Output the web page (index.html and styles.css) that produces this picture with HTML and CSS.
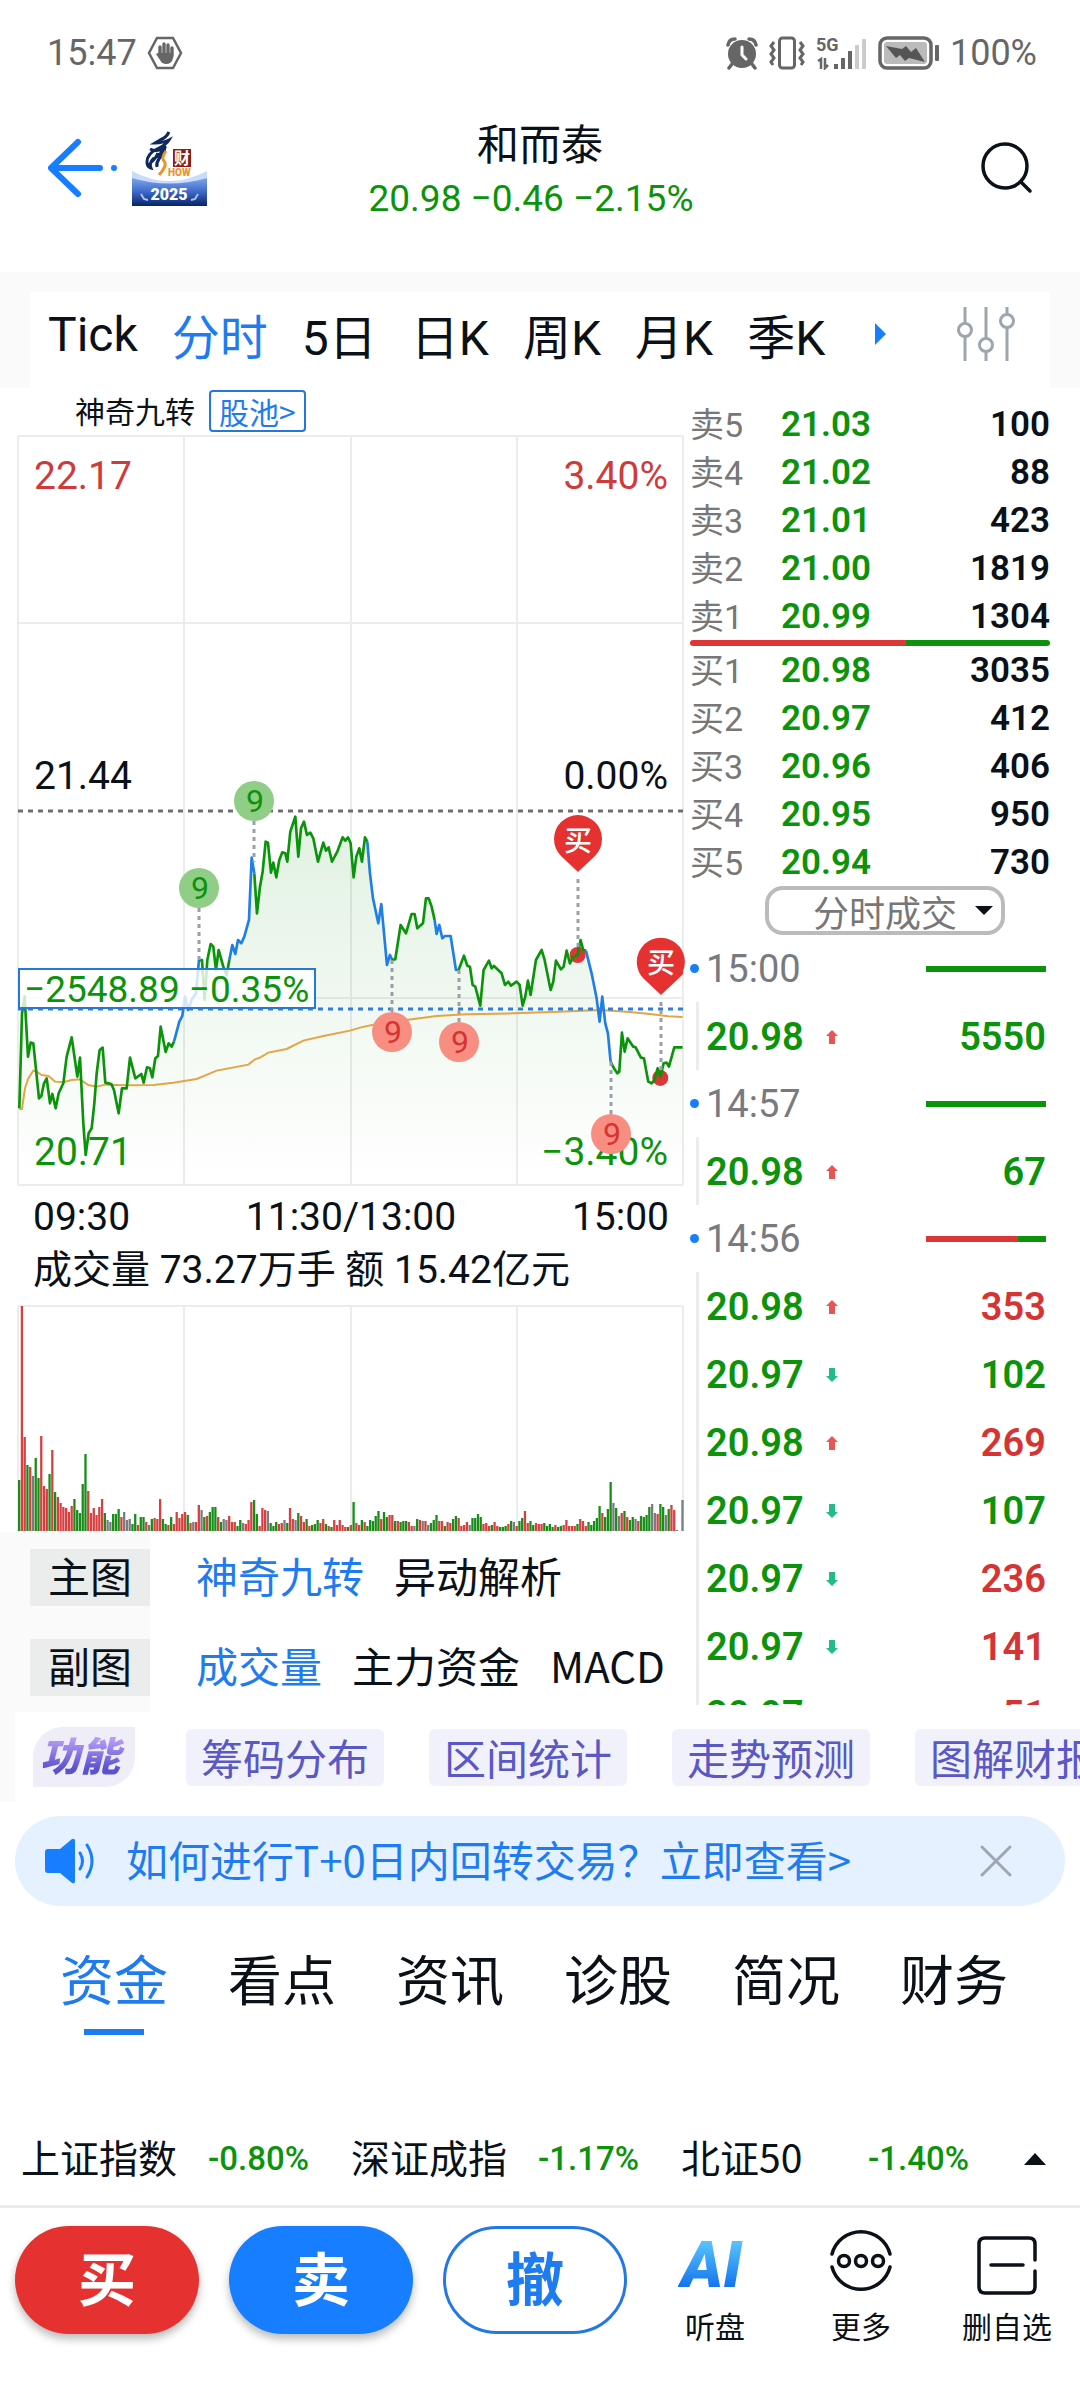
FILE: index.html
```html
<!DOCTYPE html>
<html lang="zh-CN">
<head>
<meta charset="utf-8">
<meta name="viewport" content="width=device-width">
<title>和而泰</title>
<link rel="stylesheet" href="styles.css">
</head>
<body>
<div class="status">
  <span>15:47</span>
  <svg width="36" height="36" viewBox="0 0 36 36" fill="none" stroke="#666" stroke-width="2.5"><path d="M10 3h16l8 15-8 15H10L2 18z"/><path d="M13 21V12M17 19V9M21 19V10M25 21V13" stroke-width="3.4" stroke-linecap="round"/><path d="M12 18h14v5q-1 6-7 6-4 0-6-4l-4-6 2-1z" fill="#666" stroke="none"/></svg>
  <span class="grow"></span>
  <svg width="32" height="34" viewBox="0 0 32 34"><circle cx="16" cy="18" r="14" fill="#666"/><path d="M2 9Q3 3 9 3M30 9Q29 3 23 3M6 28l-3 4M26 28l3 4" stroke="#666" stroke-width="3.5" fill="none" stroke-linecap="round"/><path d="M16 11v8l4 4" stroke="#fff" stroke-width="3" fill="none" stroke-linecap="round"/></svg>
  <svg width="38" height="34" viewBox="0 0 38 34" fill="none" stroke="#666" stroke-width="3"><rect x="11.500" y="2" width="15" height="30" rx="3"/><path d="M6 6l-3 4 3 4-3 4 3 4-3 4 2 3M32 6l3 4-3 4 3 4-3 4 3 4-2 3"/></svg>
  <svg class="signal" width="52" height="34" viewBox="0 0 52 34"><text x="0" y="15">5G</text><path d="M2 25l3-2v10M9 22v10l3-3" stroke="#666" stroke-width="2.500" fill="none"/><path d="M18 28h4v5h-4zM25 22h4v11h-4zM32 15h4v18h-4z" fill="#666"/><path d="M39 9h4v24h-4zM46 3h4v30h-4z" fill="#ccc"/></svg>
  <svg width="62" height="34" viewBox="0 0 62 34"><rect x="2" y="2" width="51" height="30" rx="7" fill="none" stroke="#666" stroke-width="3.500"/><rect x="6" y="6" width="43" height="22" rx="3" fill="#bbb"/><path d="M8 10l16 3 4-3 5 6 5-4 9 14-16-4-4 3-5-6-4 3z" fill="#555"/><rect x="57" y="9" width="4" height="16" rx="1" fill="#666"/></svg>
  <span>100%</span>
</div>

<header class="header">
  <button class="back" aria-label="返回"><svg width="70" height="60" viewBox="0 0 70 60" fill="none" stroke="#177eff" stroke-width="6" stroke-linecap="round" stroke-linejoin="round"><path d="M30 4L3 30l27 26M3 30h49"/><circle cx="66" cy="30" r="3" fill="#177eff" stroke="none"/></svg></button>
  <a class="logo" href="#" aria-label="2025">
    <svg width="75" height="75" viewBox="0 0 75 75"><defs><linearGradient id="sea" x2="0" y2="1"><stop offset="0" stop-color="#7fa5ec"/><stop offset=".5" stop-color="#3d68c9"/><stop offset="1" stop-color="#062464"/></linearGradient></defs><path d="M0 40Q37 60 75 40V75H0z" fill="#c9dcfb"/><path d="M0 47Q37 58 75 47V75H0z" fill="url(#sea)"/><path d="M37 1q-3 6-9 8l-5 3q8 0 14-3-3 5-12 9-10 5-10 13 0 5 4 6-2-5 2-9 7-3 12-12-1 7-6 12-3 4-2 8M18 18q8 4 16-3M26 22q-4 9-11 12" fill="none" stroke="#10285e" stroke-width="3"/><path d="M34 20q-5 7-2 10 4 4-5 14" fill="none" stroke="#e9952f" stroke-width="3"/><rect x="41" y="18" width="18" height="18" fill="#8e1c1c"/><text x="42" y="33" class="logo-seal">财</text><text x="36" y="45" class="logo-show">HOW</text><path d="M9 63l3 5 4 1M66 63l-3 5-4 1" fill="none" stroke="#a9c2f2" stroke-width="2"/><text x="37" y="69" text-anchor="middle" class="logo-year">2025</text></svg>
  </a>
  <div class="title">
    <h1>和而泰</h1>
    <p>20.98 −0.46 −2.15%</p>
  </div>
  <button class="search" aria-label="搜索"><svg width="54" height="54" viewBox="0 0 54 54" fill="none" stroke="#0b1118" stroke-width="3.500" stroke-linecap="round"><circle cx="25" cy="25" r="22"/><path d="M41 41l9 9"/></svg></button>
</header>

<nav class="periods">
  <div class="period-bar">
    <button>Tick</button><button class="on">分时</button><button>5日</button><button>日K</button><button>周K</button><button>月K</button><button>季K</button>
    <span class="more-arrow"></span>
    <button class="tune" aria-label="设置"><svg width="58" height="56" viewBox="0 0 58 56" fill="none" stroke="#9ca5b0" stroke-width="3"><path d="M8 1v16M8 31v24M29 1v31M29 46v9M50 1v7M50 22v33"/><circle cx="8" cy="24" r="6.500"/><circle cx="29" cy="39" r="6.500"/><circle cx="50" cy="15" r="6.500"/></svg></button>
  </div>
</nav>

<main class="board">
  <section class="left">
    <div class="signal-row"><span>神奇九转</span><button>股池&gt;</button></div>
    <svg class="chart" viewBox="0 434 690 756">
      <defs><linearGradient id="fade" gradientUnits="userSpaceOnUse" x1="0" y1="150" x2="0" y2="1275"><stop offset="0" stop-color="#008c0a" stop-opacity=".12"/><stop offset="1" stop-color="#008c0a" stop-opacity="0"/></linearGradient></defs>
      <path class="grid" d="M18 436H683M18 623H683M18 998H683M18 1185H683M18 436V1185M184 436V1185M351 436V1185M517 436V1185M683 436V1185"/>
      <path class="zero" d="M18 811H683"/>
      <g id="price" transform="translate(0 760) scale(.3333)"></g>
      <path class="index" d="M18 1009H683"/>
      <g class="lead"><path d="M254 821V862M199 908V960M392 960V1012M459 970V1022M611 1062V1114M578 879V948M661 1002V1070"/></g>
      <rect class="last" x="19" y="969" width="296" height="39"/>
      <text x="24" y="1002" class="c-green last-text">−2548.89 −0.35%</text>
      <g class="scale">
        <text x="34" y="489" class="c-red">22.17</text><text x="668" y="489" class="c-red" text-anchor="end">3.40%</text>
        <text x="34" y="789">21.44</text><text x="668" y="789" text-anchor="end">0.00%</text>
        <text x="34" y="1165" class="c-green">20.71</text><text x="668" y="1165" class="c-green" text-anchor="end">−3.40%</text>
      </g>
      <g class="nine up"><circle cx="254" cy="801" r="20"/><text x="255" y="812">9</text><circle cx="199" cy="888" r="20"/><text x="200" y="899">9</text></g>
      <g class="nine down"><circle cx="392" cy="1032" r="20"/><text x="393" y="1043">9</text><circle cx="459" cy="1042" r="20"/><text x="460" y="1053">9</text><circle cx="611" cy="1134" r="20"/><text x="612" y="1145">9</text></g>
      <g class="pin"><path d="M578 872L561 856A24 24 0 1 1 595 856zM661 995L644 979A24 24 0 1 1 683 971V974L678 979z"/><text x="578" y="851">买</text><text x="661" y="973">买</text></g>
    </svg>
    <div class="times"><span>09:30</span><span>11:30/13:00</span><span>15:00</span></div>
    <p class="volume-title">成交量 73.27万手 额 15.42亿元</p>
    <svg class="chart" viewBox="0 1300 690 232">
      <path class="grid" d="M18 1306H683M18 1306V1531M184 1306V1531M351 1306V1531M517 1306V1531M683 1306V1531"/>
      <g id="volume"></g>
    </svg>
    <div class="indicator"><span class="kind"><b>主图</b></span><div class="choices"><button class="on">神奇九转</button><button>异动解析</button></div></div>
    <div class="indicator"><span class="kind"><b>副图</b></span><div class="choices"><button class="on">成交量</button><button>主力资金</button><button>MACD</button></div></div>
  </section>

  <section class="right">
    <table class="book">
      <tr><th>卖5</th><td>21.03</td><td>100</td></tr>
      <tr><th>卖4</th><td>21.02</td><td>88</td></tr>
      <tr><th>卖3</th><td>21.01</td><td>423</td></tr>
      <tr><th>卖2</th><td>21.00</td><td>1819</td></tr>
      <tr><th>卖1</th><td>20.99</td><td>1304</td></tr>
    </table>
    <div class="ratio"></div>
    <table class="book">
      <tr><th>买1</th><td>20.98</td><td>3035</td></tr>
      <tr><th>买2</th><td>20.97</td><td>412</td></tr>
      <tr><th>买3</th><td>20.96</td><td>406</td></tr>
      <tr><th>买4</th><td>20.95</td><td>950</td></tr>
      <tr><th>买5</th><td>20.94</td><td>730</td></tr>
    </table>
    <button class="deal-type">分时成交<i></i></button>
    <div class="ticks">
      <div class="minute"><time>15:00</time><i class="all-sell"></i></div>
      <ul><li><span>20.98</span><svg class="arrow up"><use href="#arr-up"/></svg><b class="g">5550</b></li></ul>
      <div class="minute"><time>14:57</time><i class="all-sell"></i></div>
      <ul><li><span>20.98</span><svg class="arrow up"><use href="#arr-up"/></svg><b class="g">67</b></li></ul>
      <div class="minute"><time>14:56</time><i class="mixed"></i></div>
      <ul>
        <li><span>20.98</span><svg class="arrow up"><use href="#arr-up"/></svg><b>353</b></li>
        <li><span>20.97</span><svg class="arrow down"><use href="#arr-down"/></svg><b class="g">102</b></li>
        <li><span>20.98</span><svg class="arrow up"><use href="#arr-up"/></svg><b>269</b></li>
        <li><span>20.97</span><svg class="arrow down"><use href="#arr-down"/></svg><b class="g">107</b></li>
        <li><span>20.97</span><svg class="arrow down"><use href="#arr-down"/></svg><b>236</b></li>
        <li><span>20.97</span><svg class="arrow down"><use href="#arr-down"/></svg><b>141</b></li>
        <li><span>20.97</span><svg class="arrow"></svg><b>51</b></li>
      </ul>
    </div>
  </section>
</main>

<nav class="tools">
  <span class="badge"><em>功能</em></span>
  <button>筹码分布</button><button>区间统计</button><button>走势预测</button><button>图解财报</button>
</nav>

<aside class="notice">
  <svg width="52" height="46" viewBox="0 0 52 46"><path d="M3 11h12L27 1q3-1 3 2v40q0 3-3 2L15 35H3q-3 0-3-3V14q0-3 3-3z" fill="#177eff"/><path d="M35 15q5 8 0 16M42 7q10 16 0 32" fill="none" stroke="#177eff" stroke-width="3" stroke-linecap="round"/></svg>
  <a href="#">如何进行T+0日内回转交易？立即查看&gt;</a>
  <button aria-label="关闭"><svg width="34" height="34" viewBox="0 0 34 34" stroke="#9fa8b2" stroke-width="3" stroke-linecap="round"><path d="M3 3l28 28M31 3L3 31"/></svg></button>
</aside>

<nav class="sections">
  <a href="#" class="on">资金</a><a href="#">看点</a><a href="#">资讯</a><a href="#">诊股</a><a href="#">简况</a><a href="#">财务</a>
</nav>

<div class="indices">
  <div><span>上证指数</span><b>-0.80%</b></div>
  <div><span>深证成指</span><b>-1.17%</b></div>
  <div><span>北证50</span><b>-1.40%</b></div>
  <i></i>
</div>

<footer class="actions">
  <button class="trade buy">买</button><button class="trade sell">卖</button><button class="trade cancel">撤</button>
  <button class="item"><svg width="74" height="70" viewBox="0 0 74 70"><defs><linearGradient id="sky" x2="0" y2="1"><stop offset=".2" stop-color="#56c1fb"/><stop offset=".85" stop-color="#0d6cec"/></linearGradient></defs><text x="3" y="61" class="ai" fill="url(#sky)">AI</text></svg>听盘</button>
  <button class="item"><svg width="70" height="70" viewBox="0 0 70 70" fill="none" stroke="#0b1118" stroke-width="3.500" stroke-linecap="round"><path d="M6 28A30 30 0 0 1 64 28M6 41A30 30 0 0 0 64 41"/><circle cx="18" cy="35" r="5.500"/><circle cx="35" cy="35" r="5.500"/><circle cx="52" cy="35" r="5.500"/></svg>更多</button>
  <button class="item"><svg width="70" height="70" viewBox="0 0 70 70" fill="none" stroke="#0b1118" stroke-width="3.500" stroke-linecap="round"><path d="M63 34V18Q63 12 57 12H13Q7 12 7 18V61Q7 67 13 67H57Q63 67 63 61V45M19 39H51"/></svg>删自选</button>
</footer>

<svg width="0" height="0" class="sprite"><symbol id="arr-up" viewBox="0 0 12 16"><path d="M6 1l6 6H9v8H3V7H0z"/></symbol><symbol id="arr-down" viewBox="0 0 12 16"><path d="M6 15l6-6H9V1H3v8H0z"/></symbol></svg>
<script src="script.js"></script>
</body>
</html>
```
FILE: styles.css
```css
* { box-sizing: border-box; }
body { margin: 0; background: #fff; color: #0b1118; font-family: Roboto, "Noto Sans CJK SC", sans-serif; }
button { border: 0; background: none; padding: 0; margin: 0; font: inherit; color: inherit; white-space: nowrap; }
a { color: inherit; text-decoration: none; }
h1, p, ul { margin: 0; padding: 0; font-weight: 400; list-style: none; }
svg { display: block; flex: none; }
.on { color: #1f7cf0; }
.sprite { position: absolute; }

.status { display: flex; align-items: center; gap: 10px; height: 104px; padding: 2px 43px 0 47px; font-size: 36px; color: #666; }
.grow { flex: 1; }
.signal text { font: 700 18px Roboto, sans-serif; fill: #666; }

.header { display: flex; align-items: center; height: 168px; padding: 0 46px 40px 48px; gap: 14px; position: relative; }
.title { position: absolute; left: 0; right: 0; top: 14px; text-align: center; pointer-events: none; }
.title h1 { font-size: 42px; line-height: 56px; }
.title p { padding-right: 18px; font-size: 37px; line-height: 50px; color: #0c930c; }
.search { margin-left: auto; }
.logo-seal { font: 700 16px "Noto Sans CJK SC", sans-serif; fill: #fff; }
.logo-show { font: 900 10px Roboto, sans-serif; fill: #e9952f; }
.logo-year { font: 900 16px Roboto, sans-serif; fill: #fff; }

.periods { background: #fafafa; padding: 20px 30px 0; }
.period-bar { display: flex; align-items: center; gap: 34px; height: 96px; padding: 0 35px 12px 18px; background: #fff; font: 48px Roboto, "Noto Sans CJK SC", sans-serif; }
.more-arrow { margin-left: 16px; border-left: 11px solid #177eff; border-top: 11px solid transparent; border-bottom: 11px solid transparent; }
.tune { margin-left: auto; }

.board { display: grid; grid-template-columns: minmax(0, 1fr) 390px; }
.left { min-width: 0; }
.signal-row { display: flex; align-items: center; gap: 14px; height: 46px; padding-left: 75px; font: 30px "Noto Sans CJK SC", sans-serif; }
.signal-row button { height: 42px; padding: 0 8px; border: 2px solid #2478dc; border-radius: 4px; color: #1f7cf0; line-height: 36px; }
.signal-row span { line-height: 36px; padding-bottom: 2px; }
.chart { width: 100%; height: auto; }
.grid { fill: none; stroke: #ebecec; stroke-width: 2; }
.zero { stroke: #6c7074; stroke-width: 3; stroke-dasharray: 5 5; }
.index { stroke: #2f7de0; stroke-width: 3; stroke-dasharray: 5 5; }
.lead { stroke: #9aa0a8; stroke-width: 3; stroke-dasharray: 4 4; }
.last { fill: #fff; fill-opacity: .8; stroke: #2478dc; stroke-width: 2; }
.last-text { font-size: 37px; }
.scale { font-size: 39px; fill: #0b1118; }
.c-red { fill: #cf3a3a; }
.c-green, .scale .c-green { fill: #0c930c; }
.nine { font-size: 32px; text-anchor: middle; }
.up circle { fill: #90cd87; }
.up text { fill: #0c930c; }
.down circle { fill: #f88e81; }
.down text { fill: #d63434; }
.pin path { fill: #e63131; }
.pin text { fill: #fff; font: 500 28px "Noto Sans CJK SC", sans-serif; text-anchor: middle; }
.line { fill: none; stroke-width: 8; stroke-linejoin: round; }
.average { fill: none; stroke: #e3a545; stroke-width: 6; }
.times { display: grid; grid-template-columns: 1fr auto 1fr; height: 52px; padding: 0 21px 0 33px; font-size: 39px; line-height: 54px; }
.times span:last-child { text-align: right; }
.volume-title { height: 58px; padding-left: 33px; font-size: 39px; line-height: 57px; white-space: nowrap; }
.indicator { display: flex; height: 90px; font: 42px "Noto Sans CJK SC", sans-serif; }
.kind { display: flex; align-items: center; width: 150px; padding-left: 30px; background: #fafafa; }
.kind b { width: 120px; height: 57px; background: #ebeded; font-weight: 400; line-height: 52px; text-align: center; }
.choices { display: flex; align-items: center; gap: 30px; flex: 1; min-width: 0; margin: 0 23px 0 46px; padding-bottom: 5px; overflow: hidden; }

.right { display: flex; flex-direction: column; padding: 12px 30px 7px 0; }
.book { width: 100%; border-collapse: collapse; }
.book th, .book td { height: 48px; padding: 2px 0 0; line-height: 46px; }
.book th { width: 91px; text-align: left; font-size: 34px; font-weight: 400; color: #777; }
.book td { font-size: 35px; font-weight: 600; color: #0c930c; }
.book td:last-child { text-align: right; color: #0b1118; }
.ratio { height: 6px; border-radius: 3px; background: linear-gradient(to right, #dc3636 60%, #0c930c 60%); }
.deal-type { display: flex; align-items: center; justify-content: flex-end; gap: 18px; width: 240px; height: 49px; margin-left: 75px; padding-right: 8px; border: 4px solid #bbb; border-radius: 18px; color: #777; font: 36px "Noto Sans CJK SC", sans-serif; line-height: 40px; }
.deal-type i { border-top: 9px solid #0b1118; border-left: 9px solid transparent; border-right: 9px solid transparent; }
.ticks { flex: 1 1 0px; min-height: 0; overflow: hidden; font-size: 38px; }
.minute { display: flex; align-items: center; height: 67px; padding-right: 4px; color: #777b80; }
.minute::before { content: ""; width: 9px; height: 9px; margin-right: 7px; border-radius: 5px; background: #177eff; }
.minute i { width: 120px; height: 6px; margin-left: auto; }
.all-sell { background: #0c930c; }
.mixed { background: linear-gradient(to right, #dc3636 77%, #0c930c 77%); }
.ticks ul { margin-left: 6px; border-left: 3px solid #ececec; }
.ticks li { display: flex; align-items: center; height: 68px; padding: 2px 4px 0 7px; color: #0c930c; font-weight: 600; }
.ticks b { margin-left: auto; font-weight: 600; color: #d63434; }
.ticks b.g { color: #0c930c; }
.arrow { width: 12px; height: 16px; margin-left: 22px; }
.arrow.up { fill: #e85555; }
.arrow.down { fill: #22bd84; }

.tools { display: flex; align-items: center; gap: 45px; height: 90px; padding-left: 33px; overflow: hidden; background: linear-gradient(to right, #fafafa 15px, #fff 15px); color: #5a58c4; font: 42px "Noto Sans CJK SC", sans-serif; }
.tools button { flex: none; height: 57px; padding: 0 15px; border-radius: 6px; background: #f1f1fc; line-height: 52px; }
.badge { flex: none; width: 102px; height: 60px; margin-right: 6px; border-radius: 30px 0; background: #eeedf8; text-align: center; font-size: 40px; font-weight: 900; line-height: 55px; }
.badge em { padding-right: 8px; background: linear-gradient(#b79bf6 25%, #5a52cf 75%); background-clip: text; -webkit-background-clip: text; color: transparent; }

.notice { display: flex; align-items: center; height: 90px; margin: 14px 15px 0; padding: 0 52px 0 30px; border-radius: 45px; background: #e5f1fe; color: #1f7cf0; font: 42px "Noto Sans CJK SC", sans-serif; }
.notice a { flex: 1; margin-left: 29px; padding-bottom: 6px; white-space: nowrap; }

.sections { display: flex; gap: 60px; height: 129px; padding: 34px 60px 0; font: 54px "Noto Sans CJK SC", sans-serif; line-height: 76px; }
.sections a { position: relative; }
.sections .on::after { content: ""; position: absolute; left: 24px; right: 24px; bottom: 0; height: 6px; background: #1f7cf0; }

.indices { display: grid; grid-template-columns: repeat(3, 1fr) 90px; align-items: center; height: 96px; margin-top: 77px; border-bottom: 3px solid #ebebeb; font: 39px "Noto Sans CJK SC", sans-serif; }
.indices div { display: flex; justify-content: space-between; align-items: center; padding: 0 21px; }
.indices span { padding-bottom: 6px; }
.indices b { color: #0c930c; font: 500 33px Roboto, sans-serif; }
.indices i { justify-self: center; border-bottom: 12px solid #0b1118; border-left: 11px solid transparent; border-right: 11px solid transparent; }

.actions { display: flex; align-items: flex-start; padding: 18px 0 48px 15px; }
.trade { flex: none; width: 184px; height: 108px; margin-right: 30px; padding-bottom: 8px; border-radius: 54px; color: #fff; font: 700 58px "Noto Sans CJK SC", sans-serif; }
.buy { background: #e63131; box-shadow: 0 5px 9px #bbb; }
.sell { background: #177eff; box-shadow: 0 5px 9px #bbb; }
.cancel { margin-right: 15px; border: 3px solid #2478e4; color: #1f7cf0; }
.item { display: flex; flex: 1; flex-direction: column; align-items: center; font: 30px "Noto Sans CJK SC", sans-serif; line-height: 58px; }
.ai { font: italic 900 64px Roboto, sans-serif; }
```
FILE: script.js
```js
// Minute prices as runs of "x,y" points; g = normal run, b = run highlighted by the nine-turn rule.
const runs = [
  ['g', '58,1045 66,760 74,710 84,890 92,848 100,850 117,1015 124,1008 132,970 140,955 150,1030 157,1002 167,1045 176,1000 190,970 200,890 215,832 232,950 240,893 250,1090 257,1185 266,1120 275,1105 283,1030 290,940 299,870 308,863 316,968 334,972 342,990 356,1060 366,985 380,985 390,893 406,955 424,942 431,968 441,922 450,925 457,952 466,895 474,888 482,800 497,876 506,850 515,860 522,845'],
  ['b', '522,845 538,785 547,768 555,710 564,750 575,720 588,700 597,600'],
  ['g', '597,600 606,600 614,720 622,600 632,552 640,560 648,630 656,570 670,620 680,645 688,600'],
  ['b', '688,600 697,555 706,582 714,540 724,550 733,530 747,480 755,293 763,340'],
  ['g', '763,340 771,460 780,380 788,335 797,245 804,248 813,338 820,308 829,352 838,300 847,277 856,280 862,305 871,215 886,170 895,290 903,205 912,185 921,225 931,218 940,235 954,305 970,248 978,272 986,262 996,305 1012,275 1028,232 1036,242 1044,232 1052,250 1061,352 1069,290 1078,265 1086,305 1095,232 1102,245'],
  ['b', '1102,245 1110,340 1119,415 1135,490 1144,432 1161,615 1170,585 1177,600'],
  ['g', '1177,600 1186,598 1202,495 1218,520 1235,462 1244,462 1252,505 1269,490 1278,415 1286,415 1295,440 1304,480'],
  ['b', '1304,480 1310,522 1318,495 1327,535 1335,528 1352,528 1368,630 1376,630'],
  ['g', '1376,630 1392,587 1402,617 1410,620 1418,675 1426,680 1441,737 1451,630 1467,602 1475,625 1482,618 1505,640 1515,675 1525,665 1533,677 1550,665 1559,675 1568,737 1576,710 1584,662 1592,705 1608,600 1625,570 1634,600 1652,690 1660,665 1668,602 1683,628 1691,620 1700,572 1710,610 1720,590 1733,585 1742,540 1750,570 1758,572'],
  ['b', '1758,572 1775,640 1790,715 1799,785 1807,710 1816,790 1824,820 1832,905'],
  ['g', '1832,905 1842,925 1852,940 1858,935 1866,818 1874,875 1883,835 1900,860 1907,862 1923,893 1932,895 1945,965 1955,970 1964,960 1973,925 1982,950 1991,910 2000,908 2007,920 2023,862 2048,862']
];
const average = '58,1047 66,1047 75,985 85,955 100,932 110,935 125,945 145,948 165,965 190,967 215,960 240,958 265,975 290,980 315,974 380,976 460,975 520,968 590,957 650,932 745,914 765,898 780,893 805,878 860,867 910,842 970,828 1050,812 1080,803 1140,790 1235,778 1310,768 1400,763 1540,760 1680,755 1800,750 1890,756 1950,762 2005,769 2048,771';

// One bar per minute: r = up, g = down, n = flat, then its height.
const volume = 'g51 r225 r94 g66 r64 n55 g73 g53 r95 r45 r42 g57 r81 g39 r34 r28 r24 r23 r19 r25 g32 g21 g18 g47 g77 r40 r18 r23 r16 r24 r32 g18 n11 n9 g17 g17 g22 r14 n19 n11 n12 g7 g17 r6 g14 g14 r9 n6 g12 r13 r12 r32 g12 g7 r6 g14 r7 r19 r13 r17 r19 g16 r8 n9 r9 r26 n21 g14 r15 g19 g24 g24 r14 g9 n12 n11 r15 r9 r9 g5 g11 n8 r7 r11 r29 g31 g17 r5 r23 r21 n20 g8 g5 g9 r7 r8 n11 g8 r23 r12 n11 g18 r15 r9 g12 r5 g6 g7 g11 r8 r12 g7 r5 g4 r11 r6 r11 r6 r4 g4 r6 g29 r8 r6 g11 r9 g5 g11 g10 g15 g20 r12 g19 g14 r16 r16 g10 r10 g9 g10 g10 r9 r5 n5 g12 r11 n10 r10 n6 g8 g11 g16 r10 r10 g5 r9 r8 g12 g15 r13 r5 r6 r9 n6 g13 g13 g17 g14 r7 r8 r5 g6 r9 r5 g4 g4 g5 r7 g10 n9 r5 g10 g13 r20 r8 g10 g6 r8 r7 r7 g8 g5 g7 g4 r6 g4 g5 r6 r11 r5 r5 r5 g7 r12 r10 r5 g9 g6 g10 g13 g25 r18 g14 g22 g49 n28 g23 n15 r18 g20 r14 g11 g14 n12 r10 g15 g14 g16 g24 n27 n18 r17 g27 g24 n16 g22 r26 r21 n1 n0 n31';

const svgNode = (name, attrs, parent) => {
  const node = document.createElementNS('http://www.w3.org/2000/svg', name);
  for (const key in attrs) node.setAttribute(key, attrs[key]);
  parent.appendChild(node);
};

const price = document.getElementById('price');
svgNode('polygon', { points: '58,1275 ' + runs.map(r => r[1]).join(' ') + ' 2048,1275', fill: 'url(#fade)' }, price);
svgNode('polyline', { points: average, class: 'average' }, price);
svgNode('circle', { cx: 1733, cy: 585, r: 24, fill: '#dc3636' }, price);
svgNode('circle', { cx: 1981, cy: 954, r: 24, fill: '#dc3636' }, price);
runs.forEach(([kind, points]) =>
  svgNode('polyline', { points, class: 'line', stroke: kind === 'g' ? '#0c930c' : '#1f7fe6' }, price));

const bars = document.getElementById('volume');
const barColors = { r: '#d64040', g: '#188e18', n: '#7a7d80' };
volume.split(' ').forEach((bar, i) => {
  const height = Number(bar.slice(1));
  svgNode('rect', { x: (18 + i * 2.764).toFixed(2), y: 1531 - height, width: 2.3, height, fill: barColors[bar[0]] }, bars);
});
```
